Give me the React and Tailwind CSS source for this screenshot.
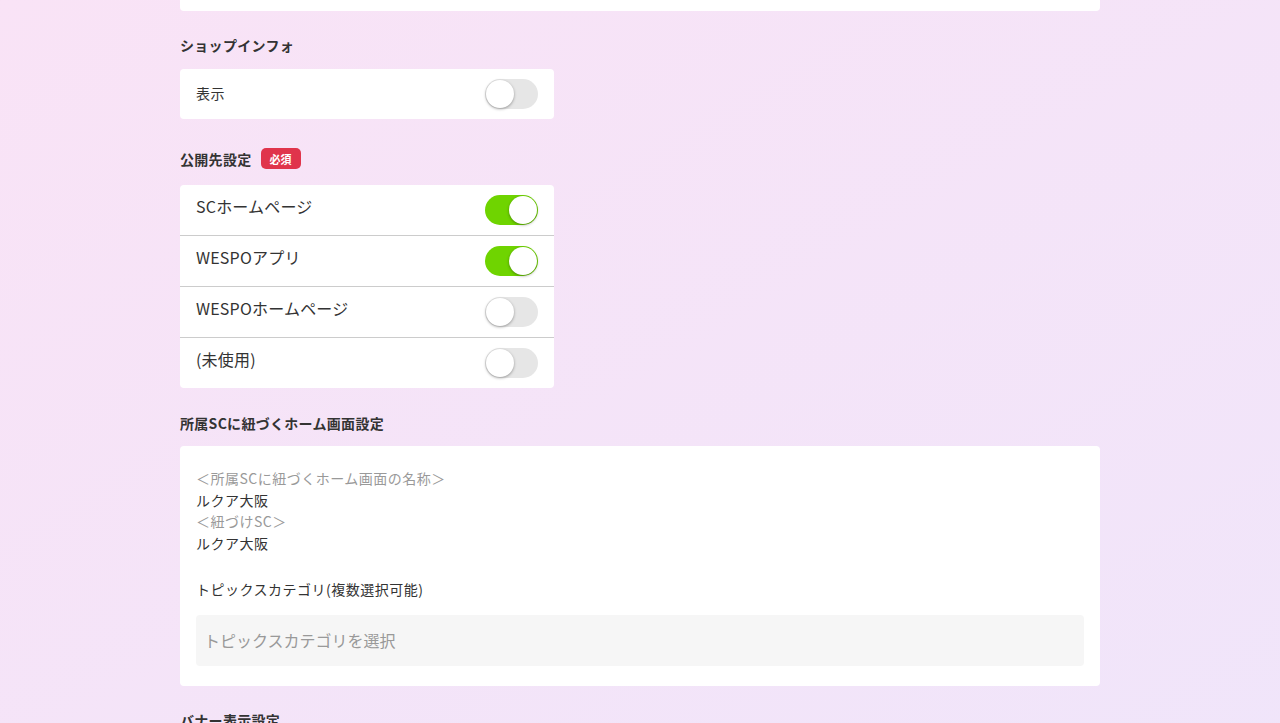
import { useState } from "react";

const FONT = { fontFamily: '"Noto Sans CJK JP", "Noto Sans", sans-serif' };

function Toggle({ on, onChange }) {
  return (
    <button
      type="button"
      onClick={onChange}
      className={`relative w-[53px] h-[30px] rounded-full shrink-0 transition-colors ${
        on ? "bg-[#6fd400]" : "bg-[#e6e6e6]"
      }`}
    >
      <span
        className={`absolute top-[1px] w-[28px] h-[28px] rounded-full bg-white shadow-[0_1px_3px_rgba(0,0,0,0.35)] transition-all ${
          on ? "left-[24px]" : "left-[1px]"
        }`}
      />
    </button>
  );
}

function Heading({ children, className = "" }) {
  return (
    <h2 className={`flex items-center gap-[9px] text-[14px] font-bold text-[#333] leading-5 tracking-[0.3px] ${className}`}>
      {children}
    </h2>
  );
}

export default function App() {
  const [shopInfo, setShopInfo] = useState(false);
  const [targets, setTargets] = useState([
    { label: "SCホームページ", on: true },
    { label: "WESPOアプリ", on: true },
    { label: "WESPOホームページ", on: false },
    { label: "(未使用)", on: false },
  ]);

  const flip = (i) =>
    setTargets((prev) => prev.map((t, j) => (j === i ? { ...t, on: !t.on } : t)));

  return (
    <div
      style={FONT}
      className="min-h-[723px] bg-linear-to-br from-[#f9e3f6] to-[#f0e5fa] text-[#333]"
    >
      <div className="w-[920px] mx-auto pb-10">
        {/* previous card (cut off) */}
        <div className="h-[11px] bg-white rounded-b-[4px]" />

        {/* shop info */}
        <Heading className="mt-[24px]">ショップインフォ</Heading>
        <div className="mt-[14px] w-[374px] h-[50px] bg-white rounded-[4px] flex items-center justify-between pl-4 pr-4">
          <span className="text-[14px] pb-[2px] tracking-[0.5px]">表示</span>
          <Toggle on={shopInfo} onChange={() => setShopInfo(!shopInfo)} />
        </div>

        {/* publish targets */}
        <Heading className="mt-[29px] h-[21px]">
          公開先設定
          <span className="inline-flex items-center h-[21px] px-[9px] rounded-[5px] bg-[#e0344b] text-white text-[11px] font-bold tracking-normal">
            必須
          </span>
        </Heading>
        <div className="mt-[16px] w-[374px] bg-white rounded-[4px]">
          {targets.map((t, i) => (
            <div
              key={t.label}
              className={`h-[50px] flex items-center justify-between px-4 ${
                i < targets.length - 1 ? "border-b border-[#cccccc] box-content" : ""
              }`}
            >
              <span className="text-[16px] pb-[8px] tracking-[0.2px]">{t.label}</span>
              <Toggle on={t.on} onChange={() => flip(i)} />
            </div>
          ))}
        </div>

        {/* home screen */}
        <Heading className="mt-[25px]">所属SCに紐づくホーム画面設定</Heading>
        <div className="mt-[13px] bg-white rounded-[4px] px-4 pt-[22px] pb-[20px] text-[14px] leading-[21.6px] tracking-[0.5px]">
          <p className="text-[#999]">＜所属SCに紐づくホーム画面の名称＞</p>
          <p>ルクア大阪</p>
          <p className="text-[#999]">＜紐づけSC＞</p>
          <p>ルクア大阪</p>
          <p className="mt-[25px]">トピックスカテゴリ(複数選択可能)</p>
          <div className="mt-[14px] h-[51px] rounded-[4px] bg-[#f6f6f6] flex items-center px-2 text-[16px] text-[#999] tracking-normal">
            トピックスカテゴリを選択
          </div>
        </div>

        <Heading className="mt-[24px]">バナー表示設定</Heading>
      </div>
    </div>
  );
}
